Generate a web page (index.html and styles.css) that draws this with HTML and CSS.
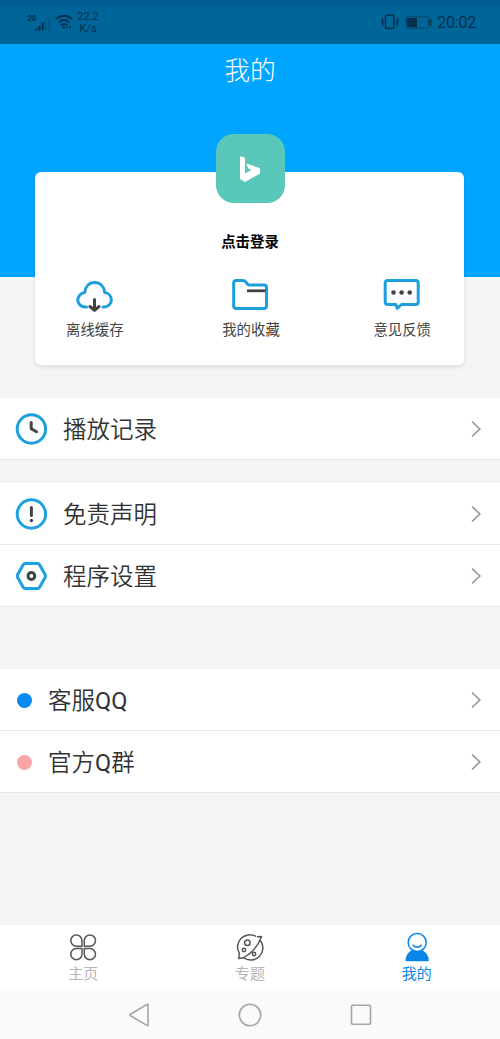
FILE: index.html
```html
<!DOCTYPE html>
<html lang="zh-CN">
<head>
<meta charset="utf-8">
<meta name="viewport" content="width=device-width, initial-scale=1">
<title>我的</title>
<link rel="stylesheet" href="styles.css">
</head>
<body>
<div class="status">
  <div class="status-left">
    <svg class="signal" width="24" height="20" viewBox="0 0 24 20" fill="none" stroke="#062f4b">
      <path stroke-width="1.1" d="M1 3.6Q1 2.6 2.5 2.6T4 4Q4 5 1 7.5H4.3M8.6 3.4Q8 2.6 7 2.6T5.7 4V6.2Q5.7 7.5 7 7.5T8.6 6.4V5.3H7.2"/>
      <path stroke-width="2" d="M9.5 15.500V17.500M12.500 13V17.500M15.700 9.500V17.500"/>
      <path stroke-width="1.200" opacity=".35" d="M18.500 7.500V17.500M22 5V17.500"/>
    </svg>
    <svg class="wifi" width="18" height="16" viewBox="0 0 18 16" fill="none" stroke="#062f4b" stroke-width="1.800">
      <path d="M1 5Q9-1.500 17 5M3.500 8.200Q9 3.800 14.500 8.200M6 11.200Q9 9 12 11.200"/>
      <path d="M7.500 13.300H10.300M11.500 13.300H13M14 13.300H16"/>
    </svg>
    <div class="speed"><span>22.2</span><span>K/s</span></div>
  </div>
  <div class="status-right">
    <svg width="20" height="16" viewBox="0 0 20 16" fill="none" stroke="#062f4b" stroke-width="1.500">
      <rect x="5.500" y="1.300" width="8.500" height="13.200" rx="1.500"/>
      <path stroke-width="1.300" d="M3 4L2 5.500 3.200 7 2 8.500 3.200 10 2.200 12M17 4L18 5.500 16.800 7 18 8.500 16.800 10 17.800 12"/>
    </svg>
    <svg class="battery" width="27" height="13" viewBox="0 0 27 13" fill="none">
      <rect x="1" y=".8" width="22.500" height="11.400" rx="1.500" stroke="#0b4468"/>
      <path d="M2 2H12V11H2Z" fill="#062f4b"/><path d="M25.500 3V10" stroke="#062f4b" stroke-width="1.600"/>
    </svg>
    <span class="clock">20:02</span>
  </div>
</div>
<header class="hero"><h1>我的</h1></header>
<section class="card">
  <div class="avatar">
    <svg width="22" height="28" viewBox="0 0 22 28"><path fill="#fff" d="M1 1L6 2.800V18.500L12.300 15 9.300 13.600 7.200 8.500 21 13.200V18.500L6 27 1 24Z"/></svg>
  </div>
  <div class="login">点击登录</div>
  <div class="shortcuts">
    <div class="shortcut">
      <svg width="38" height="34" viewBox="0 0 38 34" fill="none" stroke-linecap="round" stroke-linejoin="round" stroke-width="3">
        <path stroke="#1d9fdd" d="M10.500 29H9C5 29 1.800 25.800 1.800 21.900 1.800 18 5 15 8.700 14.600 9.300 8.500 13.300 4.500 18.700 4.500S28.100 8.500 28.800 14.600C32.500 15 35.300 18 35.300 21.900 35.300 25.800 32.400 28.800 28.500 28.900H27"/>
        <path stroke="#434343" d="M18.500 21.500V32.300M14 28.500L18.500 32.400 23 28.500"/>
      </svg>
      <span>离线缓存</span>
    </div>
    <div class="shortcut favorites">
      <svg width="38" height="34" viewBox="0 0 38 34" fill="none" stroke-linecap="round" stroke-linejoin="round" stroke-width="3">
        <path stroke="#1d9fdd" d="M4.200 2.500H11.200Q12.500 2.500 13.500 3.700L16.500 7H32Q34.500 7 34.500 9.500V28Q34.500 30.500 32 30.500H4.200Q1.700 30.500 1.700 28V5Q1.700 2.500 4.200 2.500Z"/>
        <path stroke="#434343" stroke-width="2.800" stroke-linecap="butt" d="M15 12.800H33.500"/>
      </svg>
      <span>我的收藏</span>
    </div>
    <div class="shortcut">
      <svg width="38" height="34" viewBox="0 0 38 34" fill="none" stroke-linejoin="round" stroke-width="3">
        <path stroke="#1d9fdd" d="M4.700 2.500H32.700Q35.200 2.500 35.200 5V24Q35.200 26.500 32.700 26.500H18.500L14.200 30.300 12.800 26.500H4.700Q2.200 26.500 2.200 24V5Q2.200 2.500 4.700 2.500Z"/>
        <g fill="#434343"><circle cx="10.500" cy="14.500" r="2.300"/><circle cx="18.600" cy="14.500" r="2.300"/><circle cx="26.700" cy="14.500" r="2.300"/></g>
      </svg>
      <span>意见反馈</span>
    </div>
  </div>
</section>
<section class="group">
  <div class="row">
    <svg class="lead" viewBox="0 0 32 32" fill="none"><circle cx="16.400" cy="16" r="14.200" stroke="#1d9fdd" stroke-width="3"/><path d="M16.200 9.500V15.800L21.500 18.800" stroke="#434343" stroke-width="3" stroke-linecap="round" stroke-linejoin="round"/></svg>
    <span class="label">播放记录</span>
    <svg class="chevron" viewBox="0 0 12 18"><path d="M2 1.500L9.800 9 2 16.500"/></svg>
  </div>
</section>
<section class="group second">
  <div class="row">
    <svg class="lead" viewBox="0 0 32 32" fill="none"><circle cx="16.400" cy="16" r="14.200" stroke="#1d9fe3" stroke-width="3"/><path d="M16.400 9.500V17.500" stroke="#434343" stroke-width="3" stroke-linecap="round"/><circle cx="16.400" cy="22.500" r="1.700" fill="#434343"/></svg>
    <span class="label">免责声明</span>
    <svg class="chevron" viewBox="0 0 12 18"><path d="M2 1.500L9.800 9 2 16.500"/></svg>
  </div>
  <div class="row">
    <svg class="lead" viewBox="0 0 32 32" fill="none"><g transform="translate(.4 0)"><path d="M10 3.400H22Q23.500 3.400 24.200 4.700L29.700 14.500Q30.500 16 29.700 17.500L24.200 27.300Q23.500 28.600 22 28.600H10Q8.500 28.600 7.800 27.300L2.300 17.500Q1.500 16 2.300 14.500L7.800 4.700Q8.500 3.400 10 3.400Z" stroke="#1d9fe3" stroke-width="3"/><circle cx="16" cy="16" r="3.400" stroke="#434343" stroke-width="3"/></g></svg>
    <span class="label">程序设置</span>
    <svg class="chevron" viewBox="0 0 12 18"><path d="M2 1.500L9.800 9 2 16.500"/></svg>
  </div>
</section>
<section class="group contacts">
  <div class="row">
    <i class="dot blue"></i><span class="label">客服<b>QQ</b></span>
    <svg class="chevron" viewBox="0 0 12 18"><path d="M2 1.500L9.800 9 2 16.500"/></svg>
  </div>
  <div class="row">
    <i class="dot pink"></i><span class="label">官方<b>Q</b>群</span>
    <svg class="chevron" viewBox="0 0 12 18"><path d="M2 1.500L9.800 9 2 16.500"/></svg>
  </div>
</section>
<nav class="tabs">
  <div class="tab">
    <svg width="30" height="30" viewBox="0 0 30 30" fill="none" stroke="#555" stroke-width="1.500" stroke-linejoin="round">
      <path d="M14 14.200H8.300A5.600 5.600 0 1 1 14 8.500ZM16.300 14.200V8.500A5.600 5.600 0 1 1 22 14.200ZM14 16.500V22.200A5.600 5.600 0 1 1 8.300 16.500ZM16.300 16.500H22A5.600 5.600 0 1 1 16.300 22.200Z"/>
    </svg>
    <span>主页</span>
  </div>
  <div class="tab">
    <svg width="30" height="30" viewBox="0 0 30 30" fill="none" stroke="#555" stroke-width="1.500" stroke-linecap="round" stroke-linejoin="round">
      <path d="M20.500 4.200A12.200 12.200 0 0 0 4.300 21.200L3.800 26.400 8.500 25.700C16 21.500 23 14.500 26.600 4.600L22.500 4.800M25.500 8.600A12.200 12.200 0 0 1 8.500 25.700"/>
      <circle cx="12.300" cy="10.700" r="2.800"/><circle cx="9" cy="18" r="1.700"/><circle cx="19" cy="22" r="1.700"/>
    </svg>
    <span>专题</span>
  </div>
  <div class="tab active">
    <svg width="30" height="30" viewBox="0 0 30 30">
      <path fill="#0b86e8" d="M9 18.500H21Q26.700 22.500 26.800 28.500Q26.800 29.200 26 29.200H4.300Q3.500 29.200 3.500 28.500 3.600 22.500 9 18.500Z"/>
      <circle cx="15.200" cy="10.500" r="9" fill="#fff" stroke="#0b86e8" stroke-width="1.500"/>
      <path d="M11.200 13.300Q15.200 16.800 19.200 13.300" fill="none" stroke="#0b86e8" stroke-width="1.600" stroke-linecap="round"/>
    </svg>
    <span>我的</span>
  </div>
</nav>
<div class="system">
  <svg width="24" height="24" viewBox="0 0 24 24"><path d="M21 1.500V22.500Q21 23 20.300 22.600L3.100 12.500Q2.400 12 3.100 11.500L20.300 1.300Q21 1 21 1.500Z"/></svg>
  <svg width="24" height="24" viewBox="0 0 24 24"><circle cx="12" cy="12" r="10.700"/></svg>
  <svg width="24" height="24" viewBox="0 0 24 24"><rect x="2.500" y="2.300" width="19" height="19" rx="1"/></svg>
</div>
</body>
</html>
```
FILE: styles.css
```css
* { box-sizing: border-box; }
body {
  margin: 0;
  height: 1039px;
  display: flex;
  flex-direction: column;
  overflow: hidden;
  background: #f5f5f5;
  color: #333;
  font-family: Roboto, "Noto Sans CJK SC", sans-serif;
}
svg { display: block; flex: none; }
.status {
  flex: none;
  height: 44px;
  display: flex;
  justify-content: space-between;
  padding: 0 24px 0 27px;
  background: linear-gradient(#015c8f, #006599 12px);
  color: #062f4b;
}
.status-left, .status-right { display: flex; align-items: center; }
.signal { margin-top: 2px; }
.wifi { margin-left: 4px; }
.speed {
  margin-left: 4px;
  padding-top: 2px;
  width: 22px;
  display: flex;
  flex-direction: column;
  align-items: center;
  font-size: 11px;
  line-height: 12px;
}
.battery { margin: 0 5px 0 5px; }
.clock { font-size: 16px; letter-spacing: -0.2px; }
.hero {
  flex: none;
  height: 233px;
  background: #00a5ff;
  text-align: center;
}
.hero h1 {
  margin: 0;
  padding-top: 7px;
  font-size: 25.800px;
  line-height: 40px;
  font-weight: 300;
  color: #fff;
}
.card {
  flex: none;
  height: 193px;
  margin: -105px 36px 0 35px;
  display: flex;
  flex-direction: column;
  align-items: center;
  background: #fff;
  border-radius: 6px;
  box-shadow: 0 2px 5px rgba(0, 0, 0, .1);
}
.avatar {
  flex: none;
  width: 69px;
  height: 69px;
  margin-top: -38px;
  margin-left: 1px;
  display: flex;
  align-items: center;
  justify-content: center;
  border-radius: 18px;
  background: #5ac8b8;
}
.login {
  margin: 29px 0 0 1px;
  font-size: 14.400px;
  line-height: 22px;
  font-weight: 700;
  color: #000;
}
.shortcuts {
  align-self: stretch;
  display: flex;
  justify-content: space-between;
  margin-top: 24px;
  padding: 0 33px 0 31px;
}
.shortcut {
  display: flex;
  flex-direction: column;
  align-items: center;
  gap: 8px;
  font-size: 14.400px;
  line-height: 22px;
  color: #444;
}
.favorites { margin-left: 5px; }
.group { flex: none; margin-top: 33px; }
.second { margin-top: 23px; }
.contacts { margin-top: 62px; }
.row {
  height: 62px;
  display: flex;
  align-items: center;
  padding: 0 18px 0 15px;
  background: #fff;
  border-bottom: 1px solid #e8e8e8;
}
.lead { width: 32px; height: 32px; margin-right: 16px; }
.label {
  flex: 1;
  padding-top: 3px;
  font-size: 23.500px;
  line-height: 34px;
  font-weight: 350;
}
.label b { font-weight: 400; }
.chevron { width: 12px; height: 18px; fill: none; stroke: #999; stroke-width: 1.700; }
.dot { width: 15px; height: 15px; margin: 1px 16px 0 2px; border-radius: 50%; }
.blue { background: #078af4; }
.pink { background: #fca5a8; }
.tabs {
  flex: none;
  height: 66px;
  margin-top: auto;
  display: flex;
  background: #fff;
}
.tab {
  flex: 1;
  display: flex;
  flex-direction: column;
  align-items: center;
  gap: 1px;
  padding-top: 7px;
  font-size: 15px;
  line-height: 22px;
  color: #b5b5b5;
}
.active { color: #0b86e8; }
.system {
  flex: none;
  height: 48px;
  display: flex;
  justify-content: center;
  align-items: center;
  gap: 87px;
  background: #fafafa;
}
.system svg { fill: none; stroke: #a6a6a6; stroke-width: 1.600; }
```
